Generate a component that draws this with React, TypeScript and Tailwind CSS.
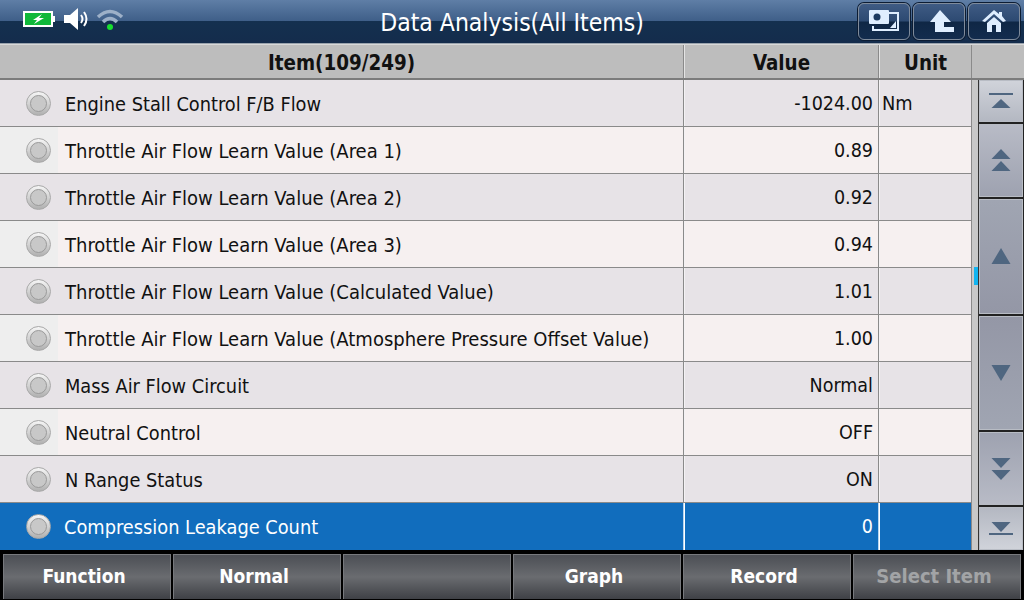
import { ReactNode } from "react";

const rows = [
  { name: "Engine Stall Control F/B Flow", value: "-1024.00", unit: "Nm" },
  { name: "Throttle Air Flow Learn Value (Area 1)", value: "0.89", unit: "" },
  { name: "Throttle Air Flow Learn Value (Area 2)", value: "0.92", unit: "" },
  { name: "Throttle Air Flow Learn Value (Area 3)", value: "0.94", unit: "" },
  { name: "Throttle Air Flow Learn Value (Calculated Value)", value: "1.01", unit: "" },
  { name: "Throttle Air Flow Learn Value (Atmosphere Pressure Offset Value)", value: "1.00", unit: "" },
  { name: "Mass Air Flow Circuit", value: "Normal", unit: "" },
  { name: "Neutral Control", value: "OFF", unit: "" },
  { name: "N Range Status", value: "ON", unit: "" },
  { name: "Compression Leakage Count", value: "0", unit: "" },
];

const footer = ["Function", "Normal", "", "Graph", "Record", "Select Item"];

function Radio() {
  return (
    <div className="flex h-[25px] w-[25px] items-center justify-center rounded-full border border-[#a8a8a8] bg-gradient-to-b from-[#f6f6f6] to-[#b0b0b0]">
      <div className="h-[17px] w-[17px] rounded-full border border-[#9a9a9a] bg-[#c8c8c8]" />
    </div>
  );
}

function Up({ y, h = 10 }: { y: number; h?: number }) {
  return <polygon points={`10.5,${y + h} 20,${y} 29.5,${y + h}`} fill="#4f6680" />;
}

function Down({ y, h = 10 }: { y: number; h?: number }) {
  return <polygon points={`10.5,${y} 29.5,${y} 20,${y + h}`} fill="#4f6680" />;
}

function ScrollButton({ className, children }: { className: string; children: ReactNode }) {
  return (
    <div className={`flex w-[44px] items-center justify-center border border-[#b8bcc4] ${className}`}>
      <svg width="40" height="30" viewBox="0 0 40 30">
        {children}
      </svg>
    </div>
  );
}

function HeaderButton({ children }: { children: ReactNode }) {
  return (
    <div className="h-[37px] w-[52px] rounded-[6px] border border-[#7f8b9b] bg-[linear-gradient(#3f5b84_0%,#2d4a72_48%,#0f2745_52%,#132c4e_100%)] shadow-[0_0_0_1px_#0c1c33]">
      <svg width="50" height="35" viewBox="1 1 50 35">
        {children}
      </svg>
    </div>
  );
}

export default function App() {
  return (
    <div className="flex h-[600px] w-[1024px] flex-col overflow-hidden bg-black font-['DejaVu_Sans_Condensed','DejaVu_Sans',sans-serif] text-[#111]">
      {/* title bar */}
      <div className="relative flex h-[44px] items-start border-b border-[#9aa3ad] bg-[linear-gradient(#5f7ea6_0%,#3f5f89_48%,#14304f_50%,#142c4c_100%)]">
        <div className="flex items-center pl-[23px] pt-[7px]">
          <svg width="33" height="16" viewBox="0 0 33 16">
            <rect x="1" y="1" width="28" height="14" fill="#10b83a" stroke="#fff" strokeWidth="2" />
            <rect x="29" y="5" width="3" height="6" fill="#fff" />
            <polygon points="19,3 10,9 14,9 11,13 21,7 16,7" fill="#fff" />
          </svg>
          <svg className="ml-[7px]" width="28" height="24" viewBox="0 0 28 24">
            <polygon points="1,8 7,8 15,1 15,23 7,16 1,16" fill="#fff" />
            <path d="M18 8 Q21 12 18 16 M21 5 Q26 12 21 19" stroke="#fff" strokeWidth="2" fill="none" />
          </svg>
          <svg className="ml-[5px]" width="28" height="24" viewBox="0 0 28 24">
            <path d="M2 10 Q14 -1 26 10" stroke="#9db0c8" strokeWidth="3.5" fill="none" />
            <path d="M7 15 Q14 8 21 15" stroke="#9db0c8" strokeWidth="3.5" fill="none" />
            <circle cx="14" cy="20" r="3" fill="#18e030" />
          </svg>
        </div>
        <div className="absolute inset-x-0 top-[7px] text-center text-[24.5px] leading-[32px] text-white">
          Data Analysis(All Items)
        </div>
        <div className="ml-auto flex gap-[3px] pr-[4px] pt-[3px]">
          <HeaderButton>
            <path d="M31 10 H40 V27 H15 V23" stroke="#dfeeff" strokeWidth="2" fill="none" />
            <polygon points="38,18 38,25 32,25" fill="#dfeeff" />
            <rect x="11" y="7" width="20" height="14" rx="1" fill="#dfeeff" />
            <circle cx="19" cy="14" r="3.5" fill="#1c3a60" />
          </HeaderButton>
          <HeaderButton>
            <polygon points="27,7 38,19 31,19 31,24 41,24 41,29 22,29 22,19 17,19" fill="#dfeeff" />
          </HeaderButton>
          <HeaderButton>
            <polygon points="26,7 31,11 31,9 34,9 34,13 38,18 35,19 26,11 17,19 14,18" fill="#dfeeff" />
            <polygon points="19,20 26,14 33,20 33,29 28,29 28,22 24,22 24,29 19,29" fill="#dfeeff" />
          </HeaderButton>
        </div>
      </div>

      {/* column heads */}
      <div className="flex h-[36px] border-b-2 border-t border-b-[#7c7c7c] border-t-[#d8d8d8] bg-[#bdbdbd] text-[20.4px] font-bold leading-[36px]">
        <div className="w-[684px] border-r border-r-[#8a8a8a] text-center">Item(109/249)</div>
        <div className="w-[195px] border-l border-r border-l-[#e4e4e4] border-r-[#8a8a8a] text-center">Value</div>
        <div className="w-[93px] border-l border-r border-l-[#e4e4e4] border-r-[#8a8a8a] text-center">Unit</div>
        <div className="flex-1" />
      </div>

      {/* table + scroller */}
      <div className="flex h-[470px]">
        <div className="w-[972px]">
          {rows.map((row, i) => {
            const selected = i === rows.length - 1;
            const throttle = row.name.startsWith("Throttle");
            const bg = selected ? "bg-[#116dbd] text-white" : i % 2 === 0 ? "bg-[#e7e3e7]" : "bg-[#f6f0f0]";
            const line = selected ? "border-r-[#b8d4ee]" : "border-r-[#8a8a8a]";
            const light = selected ? "border-l-white" : "border-l-[#f4f2f4]";
            return (
              <div
                key={row.name}
                className={`flex h-[47px] text-[19.8px] ${bg} ${selected ? "" : "border-b border-b-[#8a8a8a]"}`}
              >
                <div className={`flex w-[684px] items-center border-r ${line}`}>
                  <div
                    className={`flex h-full w-[58px] shrink-0 items-center pl-[26px] ${
                      i % 2 === 1 && !selected ? "bg-[#eeeeee]" : ""
                    }`}
                  >
                    <Radio />
                  </div>
                  <span
                    className={
                      selected
                        ? "pl-[6px] pt-[2px]"
                        : throttle
                          ? "pl-[7px] pt-[2px] text-[20px]"
                          : "pl-[7px] pt-[4px]"
                    }
                  >
                    {row.name}
                  </span>
                </div>
                <div
                  className={`flex w-[195px] items-center justify-end border-l border-r pr-[5px] text-[19.5px] ${line} ${light} ${
                    selected ? "" : "pt-[2px]"
                  }`}
                >
                  {row.value}
                </div>
                <div className={`flex flex-1 items-center border-l border-r border-r-[#8a8a8a] pl-[2px] ${light} ${selected ? "" : "pt-[2px]"}`}>
                  {row.unit}
                </div>
              </div>
            );
          })}
        </div>
        <div className="relative flex flex-1 bg-[#c8c8c8]">
          <div className="absolute left-[2px] top-[187px] h-[18px] w-[4px] bg-[#12b4f0]" />
          <div className="ml-[6px] flex h-full flex-1 flex-col gap-[2px] border-l border-l-[#333] bg-[#222]">
            <ScrollButton className="h-[42px] bg-gradient-to-b from-[#d0d3da] to-[#b4b8c2]">
              <rect x="8" y="7" width="24" height="2" fill="#4f6680" />
              <Up y={13} h={9} />
            </ScrollButton>
            <ScrollButton className="h-[73px] bg-gradient-to-b from-[#b8bbc6] to-[#9ea2b0]">
              <Up y={4} />
              <Up y={16} />
            </ScrollButton>
            <ScrollButton className="h-[115px] bg-gradient-to-b from-[#a0a5b2] to-[#9497a6]">
              <Up y={7} h={16} />
            </ScrollButton>
            <ScrollButton className="h-[115px] bg-gradient-to-b from-[#9497a6] to-[#a0a5b2]">
              <Down y={7} h={16} />
            </ScrollButton>
            <ScrollButton className="h-[73px] bg-gradient-to-b from-[#9ea2b0] to-[#b8bbc6]">
              <Down y={4} />
              <Down y={16} />
            </ScrollButton>
            <ScrollButton className="h-[43px] bg-gradient-to-b from-[#b4b8c2] to-[#d0d3da]">
              <Down y={8} />
              <rect x="8" y="19" width="24" height="2" fill="#4f6680" />
            </ScrollButton>
          </div>
        </div>
      </div>

      {/* function keys */}
      <div className="flex flex-1 gap-[2px] pl-[3px] pt-[4px]">
        {footer.map((label) => (
          <div
            key={label || "blank"}
            className={`flex h-[45px] w-[168px] items-center justify-center border border-b-0 border-[#77797d] bg-gradient-to-b from-[#4c4f55] via-[#6a6c70] to-[#3f4146] pb-[2px] pr-[6px] font-bold ${
              label === "Select Item" ? "text-[20px] text-[#a2a4a6]" : "text-[19px] text-white"
            }`}
          >
            {label}
          </div>
        ))}
      </div>
    </div>
  );
}
